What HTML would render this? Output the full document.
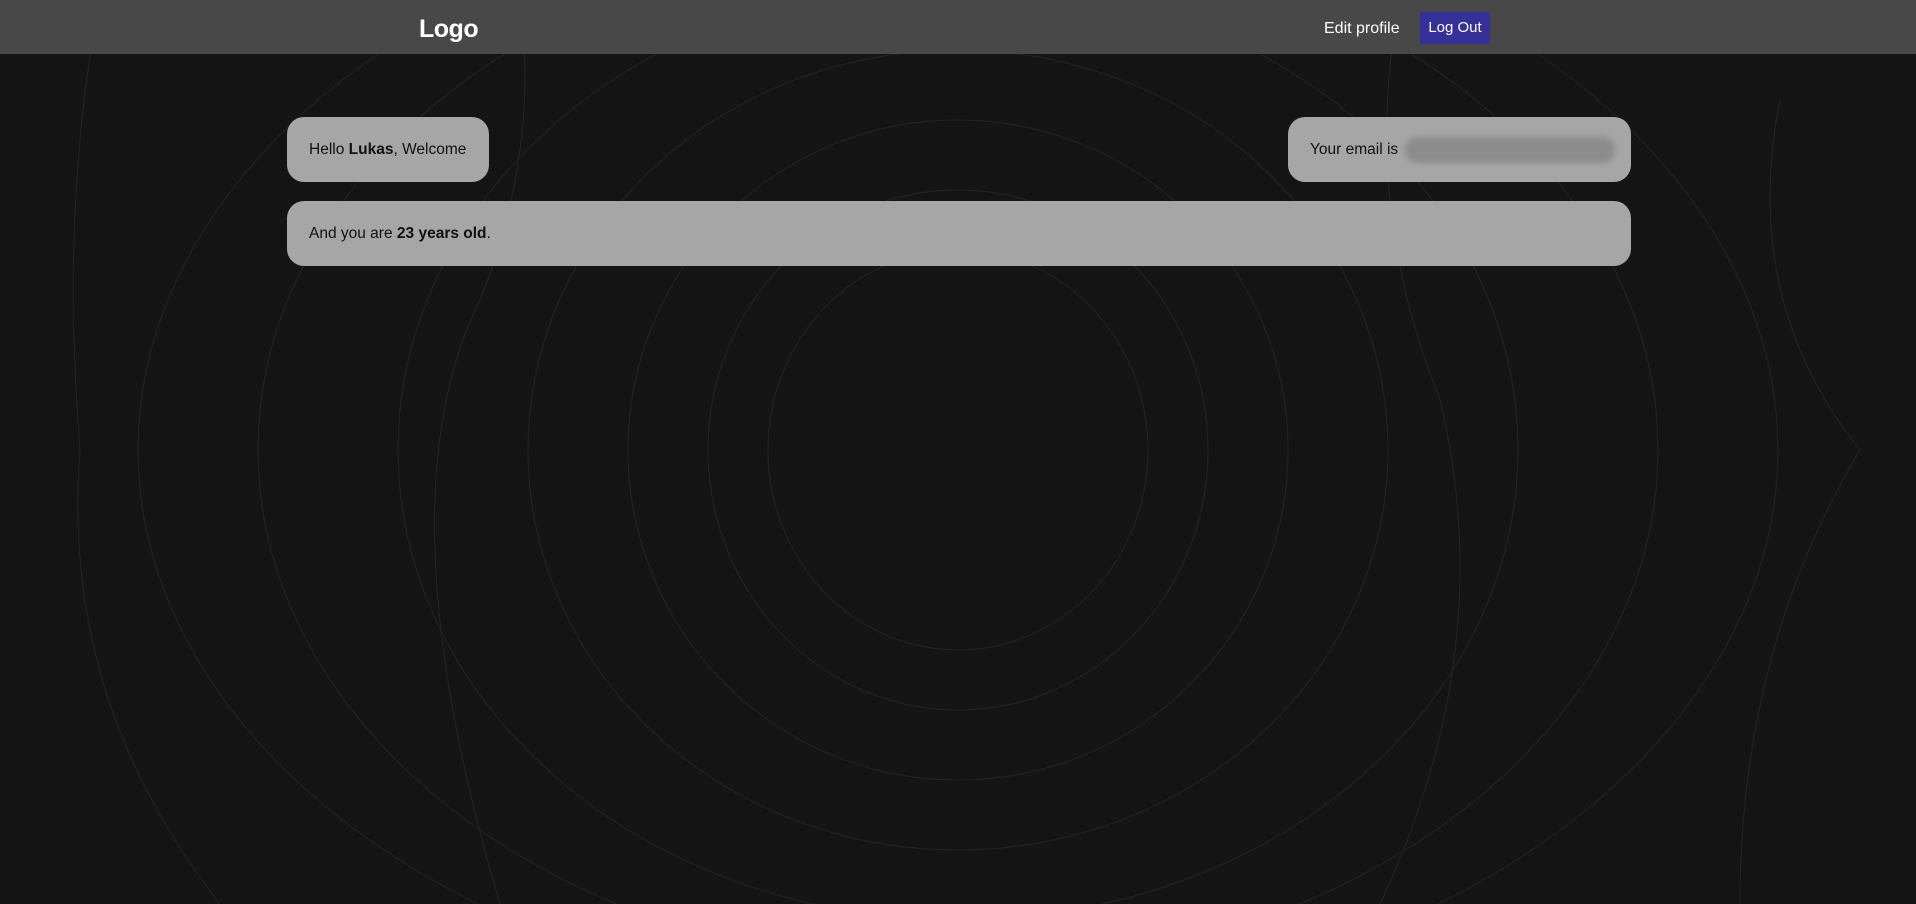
<!DOCTYPE html>
<html><head><style>
html,body{margin:0;padding:0;width:1916px;height:904px;overflow:hidden;background:#141414;font-family:"Liberation Sans",sans-serif;}
.bg{position:absolute;left:0;top:0;width:1916px;height:904px;overflow:hidden}
.nav{position:absolute;left:0;top:0;width:1916px;height:54px;background:#484848;}
.logo{position:absolute;left:419px;top:15px;color:#fff;font-weight:bold;font-size:25px;letter-spacing:-0.5px}
.edit{position:absolute;left:1324px;top:20px;color:#fff;font-size:16px}
.btn{position:absolute;left:1420px;top:12px;width:70px;height:32px;background:#36309a;border-radius:2px;color:#fff;font-size:15px;line-height:32px;text-align:center}
.card{position:absolute;background:#a6a6a6;border-radius:17px;color:#111;font-size:15.5px;box-sizing:border-box;padding-left:22px;line-height:65px;height:65px}
.blur{position:absolute;left:1405px;top:137px;width:210px;height:26px;border-radius:13px;background:#8c8c8c;filter:blur(3px)}
</style></head><body>
<div class="bg">
<svg width="1916" height="904" fill="none" stroke="#242424" stroke-width="1">
<ellipse cx="958" cy="450" rx="190" ry="200"/>
<ellipse cx="958" cy="450" rx="250" ry="260"/>
<ellipse cx="958" cy="450" rx="330" ry="330"/>
<ellipse cx="958" cy="450" rx="430" ry="400"/>
<ellipse cx="958" cy="450" rx="560" ry="470"/>
<ellipse cx="958" cy="450" rx="700" ry="520"/>
<ellipse cx="958" cy="450" rx="820" ry="560"/>
<path d="M100 0 Q60 200 80 450 Q60 700 220 904 M520 0 Q540 150 480 300 Q380 500 500 904 M1400 0 Q1360 200 1440 400 Q1500 650 1380 904 M1780 100 Q1740 300 1860 450 Q1740 650 1740 904"/>
</svg>
</div>
<div class="nav"><div class="logo">Logo</div><div class="edit">Edit profile</div><div class="btn">Log Out</div></div>
<div class="card" style="left:287px;top:117px;width:202px">Hello <b>Lukas</b>, Welcome</div>
<div class="card" style="left:1288px;top:117px;width:343px">Your email is</div>
<div class="blur"></div>
<div class="card" style="left:287px;top:201px;width:1344px">And you are <b>23 years old</b>.</div>
</body></html>
